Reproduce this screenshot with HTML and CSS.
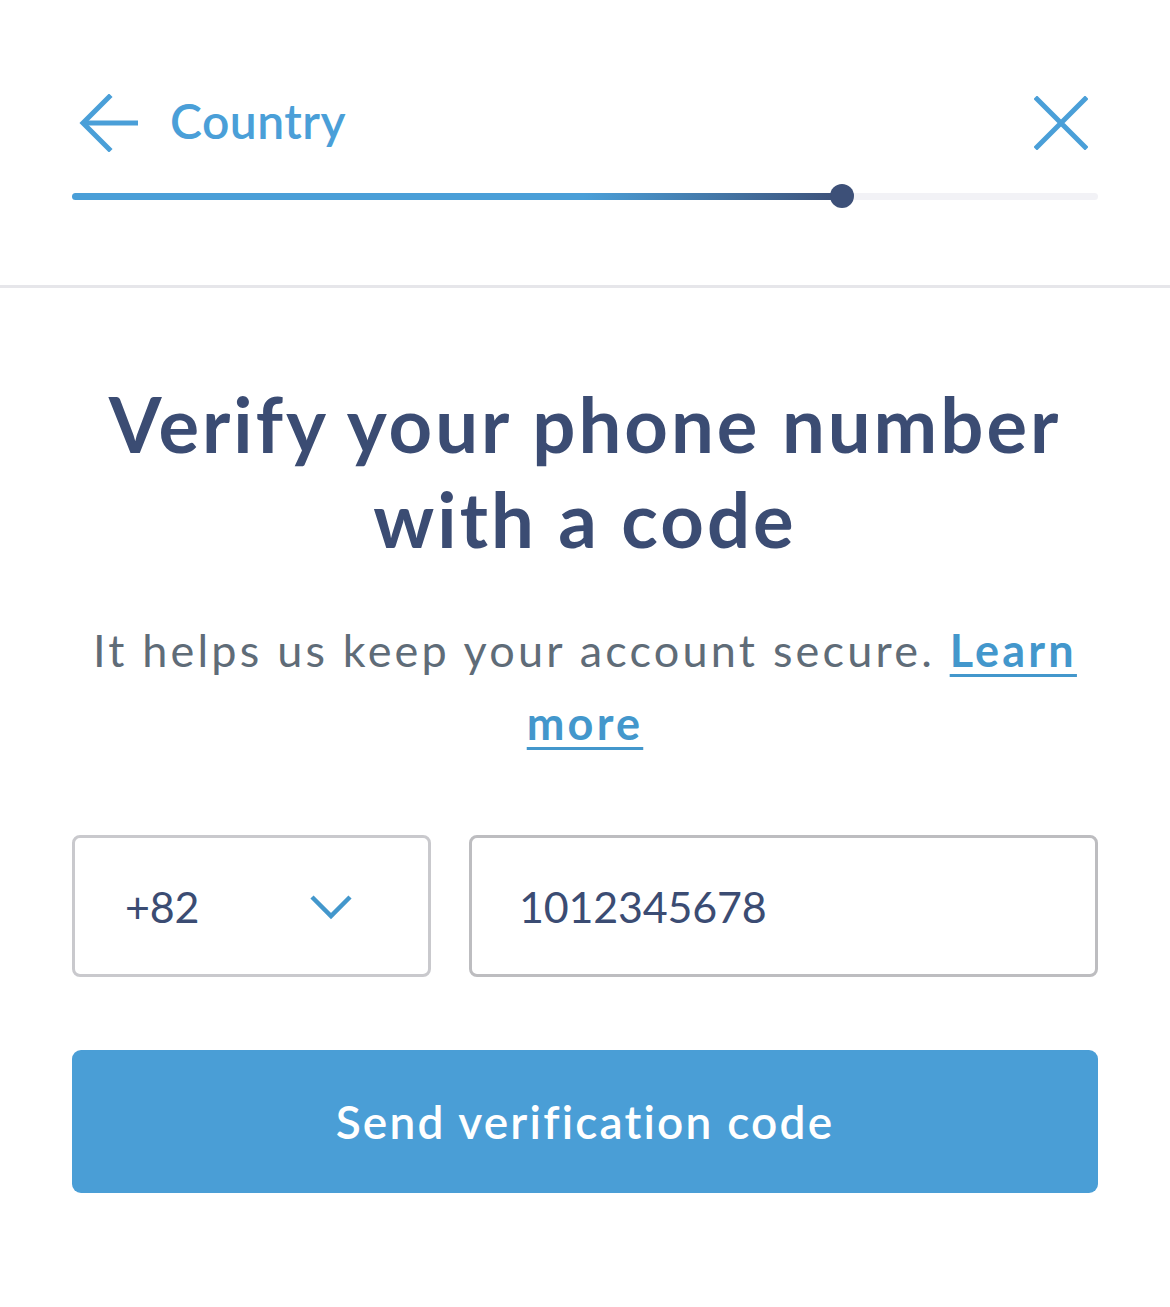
FILE: index.html
```html
<!DOCTYPE html>
<html lang="en">
<head>
<meta charset="utf-8">
<title>Verify your phone number</title>
<link rel="stylesheet" href="styles.css">
</head>
<body>
<header class="top">
  <div class="nav">
    <div class="nav-left">
      <svg class="back" width="62" height="58" viewBox="0 0 62 58" fill="none" stroke="#4a9fd8" stroke-width="5">
        <path d="M31 3 L5 29 L31 55" stroke-linecap="square"/>
        <path d="M5 29 H60"/>
      </svg>
      <span class="nav-title">Country</span>
    </div>
    <svg class="close" width="54" height="54" viewBox="0 0 54 54" fill="none" stroke="#4a9fd8" stroke-width="5" stroke-linecap="square">
      <path d="M3 3 L51 51 M51 3 L3 51"/>
    </svg>
  </div>
  <div class="progress">
    <div class="progress-fill">
      <div class="fill-solid"></div>
      <div class="fill-grad"></div>
      <div class="knob"></div>
    </div>
  </div>
</header>
<main class="content">
  <h1 class="title">Verify your phone number<br>with a code</h1>
  <p class="sub">It helps us keep your account secure. <a class="link" href="#">Learn more</a></p>
  <div class="fields">
    <div class="field select">
      <span class="val">+82</span>
      <svg class="chev" width="42" height="26" viewBox="0 0 42 26" fill="none" stroke="#4397cc" stroke-width="4.5">
        <path d="M2 3 L21 22 L40 3"/>
      </svg>
    </div>
    <div class="field phone"><span class="val">1012345678</span></div>
  </div>
  <button class="btn" type="button">Send verification code</button>
</main>
</body>
</html>
```
FILE: styles.css
```css
* { box-sizing: border-box; }
html, body { margin: 0; padding: 0; background: #fff; }
body {
  font-family: Lato, "Noto Sans", "Liberation Sans", sans-serif;
  width: 1170px;
  height: 1307px;
  overflow: hidden;
}
.top {
  border-bottom: 3px solid #e6e6ea;
  padding: 94px 72px 0;
  height: 288px;
}
.nav {
  display: flex;
  justify-content: space-between;
  align-items: center;
  height: 58px;
}
.nav-left {
  display: flex;
  align-items: center;
  gap: 30px;
  padding-left: 6px;
}
.nav-title {
  font-size: 48px;
  font-weight: 600;
  color: #4a9fd8;
  letter-spacing: 0.5px;
  line-height: 1;
  margin-top: -4px;
}
.close { margin-right: 10px; }
.progress {
  margin-top: 41px;
  height: 7px;
  background: #f2f2f6;
  border-radius: 4px;
  position: relative;
}
.progress-fill {
  display: flex;
  width: 770px;
  height: 7px;
  position: relative;
}
.fill-solid {
  width: 512px;
  background: #4a9fd8;
  border-radius: 4px 0 0 4px;
}
.fill-grad {
  flex: 1;
  background: linear-gradient(90deg, #4a9fd8, #3d5078);
}
.knob {
  position: absolute;
  right: -12px;
  top: -9px;
  width: 24px;
  height: 24px;
  border-radius: 50%;
  background: #3d5078;
}
.content {
  padding: 0 72px;
  text-align: center;
}
.title {
  margin: 88px 0 0;
  font-size: 76px;
  line-height: 95px;
  font-weight: 700;
  color: #3b4c73;
  letter-spacing: 3px;
}
.sub {
  margin: 48px 0 0;
  font-size: 45px;
  line-height: 73px;
  color: #5f6c78;
  letter-spacing: 3.2px;
}
.link {
  color: #4397cc;
  font-weight: 700;
  text-decoration: underline;
  text-decoration-thickness: 3px;
  text-underline-offset: 7px;
}
.fields {
  display: flex;
  gap: 38px;
  margin-top: 75px;
}
.field {
  height: 142px;
  border: 3px solid #c9c9cd;
  border-radius: 8px;
  display: flex;
  align-items: center;
  text-align: left;
}
.select {
  width: 359px;
  padding: 0 76px 0 50px;
  justify-content: space-between;
}
.phone {
  flex: 1;
  padding-left: 47px;
  border-color: #bdbdc0;
}
.val {
  font-size: 43px;
  color: #3b4c73;
  letter-spacing: -0.2px;
}
.chev { margin-top: 2px; }
.btn {
  display: block;
  width: 100%;
  height: 143px;
  margin-top: 73px;
  border: 0;
  border-radius: 9px;
  background: #4a9ed6;
  color: #fff;
  font-family: inherit;
  font-size: 46px;
  font-weight: 600;
  letter-spacing: 2.2px;
}
```
